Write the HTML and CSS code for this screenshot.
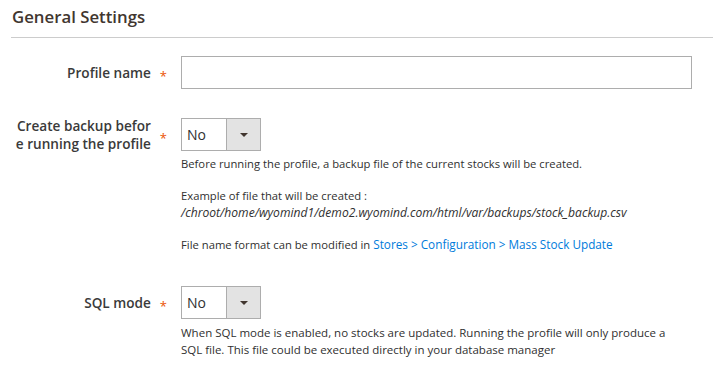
FILE: index.html
```html
<!DOCTYPE html>
<html lang="en">
  <head>
    <meta charset="UTF-8" />
    <meta name="viewport" content="width=device-width, initial-scale=1.0" />
    <title>General Settings</title>
    <link rel="stylesheet" href="styles.css">
  </head>
  <body>
    <div class="fieldset">
      <div class="legend">General Settings</div>

      <div class="field">
        <div class="label"><span>Profile name</span><span class="req">*</span></div>
        <div class="control">
          <input type="text" class="input-text" />
        </div>
      </div>

      <div class="field">
        <div class="label"><span>Create backup befor<br />e running the profile</span><span class="req">*</span></div>
        <div class="control">
          <div class="select">
            <span class="value">No</span>
            <span class="arrow"></span>
          </div>
          <div class="note">
            <p>Before running the profile, a backup file of the current stocks will be created.</p>
            <p>Example of file that will be created :<br /><i>/chroot/home/wyomind1/demo2.wyomind.com/html/var/backups/stock_backup.csv</i></p>
            <p>File name format can be modified in <a href="#">Stores &gt; Configuration &gt; Mass Stock Update</a></p>
          </div>
        </div>
      </div>

      <div class="field field-sql">
        <div class="label"><span>SQL mode</span><span class="req">*</span></div>
        <div class="control">
          <div class="select">
            <span class="value">No</span>
            <span class="arrow"></span>
          </div>
          <div class="note note-sql">
            <p>When SQL mode is enabled, no stocks are updated. Running the profile will only produce a SQL file. This file could be executed directly in your database manager</p>
          </div>
        </div>
      </div>
    </div>
  </body>
</html>
```

FILE: styles.css
```css
* {
  margin: 0;
  padding: 0;
  box-sizing: border-box;
}
body {
  background: #fff;
  font-family: "Open Sans", "Liberation Sans", sans-serif;
  color: #303030;
}
.fieldset {
  padding-left: 11px;
  padding-right: 21px;
}
.legend {
  font-size: 16.8px;
  font-weight: 600;
  color: #41362f;
  line-height: 22px;
  padding: 6px 0 9px 1px;
  border-bottom: 1px solid #cccccc;
  margin-right: -21px;
}
.field {
  display: grid;
  grid-template-columns: 170px 1fr;
  margin-top: 18px;
}
.field + .field {
  margin-top: 29px;
}
.field-sql {
  margin-top: 33px !important;
}
.label {
  display: flex;
  justify-content: flex-end;
  align-items: center;
  height: 33px;
  font-size: 13.6px;
  font-weight: 600;
  color: #3a3a3a;
  text-align: right;
  line-height: 18px;
  padding-right: 14px;
}
.label .req {
  color: #eb5202;
  font-weight: 400;
  font-size: 13px;
  margin-left: 9px;
  padding-top: 6px;
}
.input-text {
  display: block;
  width: 100%;
  height: 33px;
  border: 1px solid #adadad;
  background: #fff;
  outline: none;
}
.select {
  display: flex;
  width: 80px;
  height: 33px;
  border: 1px solid #adadad;
  font-size: 14px;
}
.select .value {
  flex: 1;
  line-height: 31px;
  padding-left: 5px;
  color: #303030;
}
.select .arrow {
  width: 34px;
  background: #e3e3e3;
  border-left: 1px solid #adadad;
  position: relative;
}
.select .arrow::after {
  content: "";
  position: absolute;
  left: 13px;
  top: 14px;
  border-left: 4px solid transparent;
  border-right: 4px solid transparent;
  border-top: 4px solid #41362f;
}
.note {
  font-size: 11.25px;
  line-height: 17.5px;
  margin-top: 4px;
}
.note p + p {
  margin-top: 14px;
}
.note i {
  font-style: italic;
  font-size: 12.1px;
}
.note a {
  color: #007bdb;
  text-decoration: none;
  font-size: 11.75px;
}
.note-sql {
  margin-top: 5px;
  padding-right: 12px;
  font-size: 11.5px;
  line-height: 17px;
}
```
